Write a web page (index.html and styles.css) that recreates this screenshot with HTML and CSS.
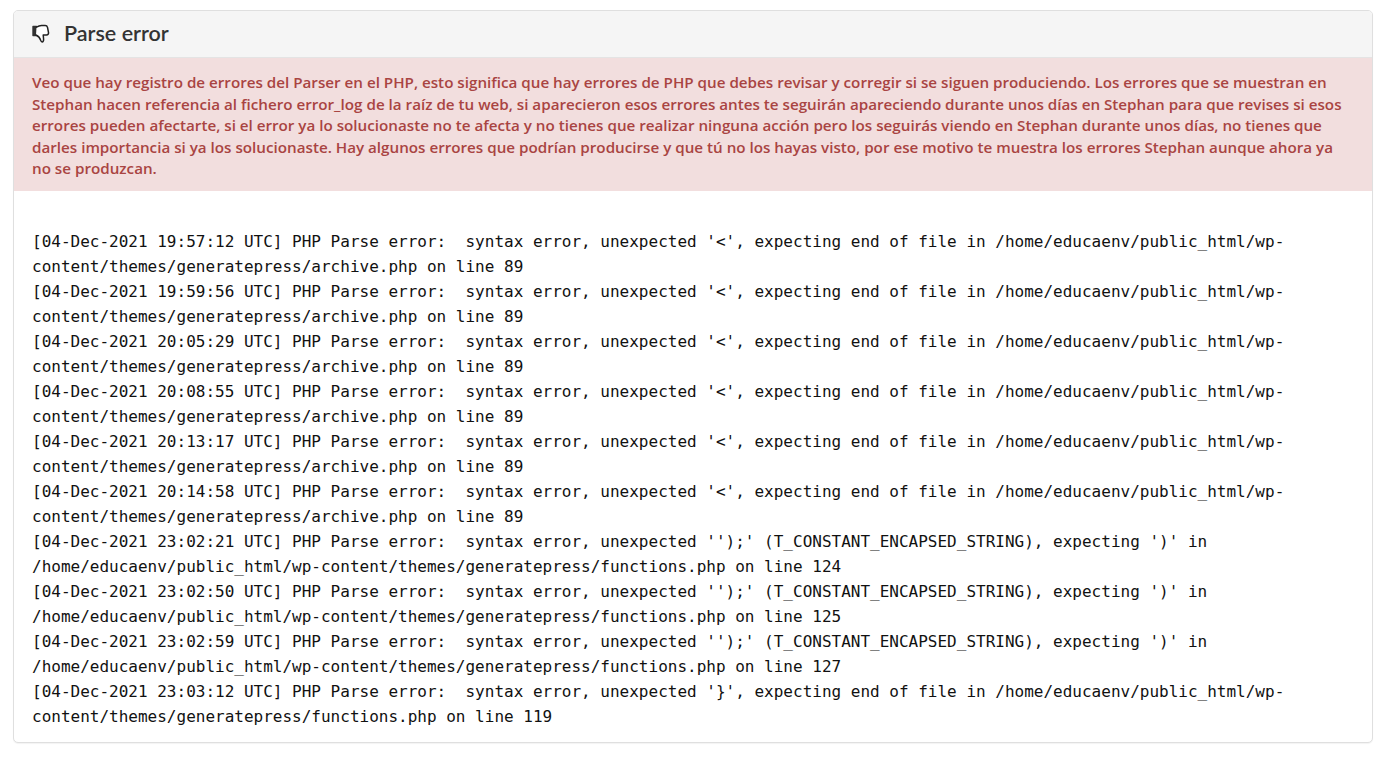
FILE: index.html
```html
<!DOCTYPE html>
<html lang="es">
<head>
<meta charset="utf-8">
<title>Parse error</title>
<link rel="stylesheet" href="styles.css">
</head>
<body>
<section class="card">
  <header class="card-head">
    <svg class="icon" viewBox="0 0 18 20" width="18" height="20" aria-hidden="true">
      <path d="M1 2.500h3.500v9H1z" fill="#333" stroke="#333" stroke-width="1.400" stroke-linejoin="round"/>
      <path d="M4.500 3.200C6 2.200 7.500 1.500 9.500 1.500h3.600c1.300 0 2.100.7 2.400 1.900l1 5.100c.2 1.400-.6 2.500-2 2.500h-3.300l.4 4.300c.1 1.400-.5 2.700-1.500 2.700-.8 0-1.100-.6-1.400-1.600-.6-2-2-4.200-4.700-5.400" fill="#fff" stroke="#222" stroke-width="1.500" stroke-linejoin="round" stroke-linecap="round"/>
    </svg>
    <h1 class="card-title">Parse error</h1>
  </header>
  <p class="alert">Veo que hay registro de errores del Parser en el PHP, esto significa que hay errores de PHP que debes revisar y corregir si se siguen produciendo. Los errores que se muestran en Stephan hacen referencia al fichero error_log de la raíz de tu web, si aparecieron esos errores antes te seguirán apareciendo durante unos días en Stephan para que revises si esos errores pueden afectarte, si el error ya lo solucionaste no te afecta y no tienes que realizar ninguna acción pero los seguirás viendo en Stephan durante unos días, no tienes que darles importancia si ya los solucionaste. Hay algunos errores que podrían producirse y que tú no los hayas visto, por ese motivo te muestra los errores Stephan aunque ahora ya no se produzcan.</p>
  <div class="log">
    <div class="log-line">[04-Dec-2021 19:57:12 UTC] PHP Parse error:  syntax error, unexpected '&lt;', expecting end of file in /home/educaenv/public_html/wp-content/themes/generatepress/archive.php on line 89</div>
    <div class="log-line">[04-Dec-2021 19:59:56 UTC] PHP Parse error:  syntax error, unexpected '&lt;', expecting end of file in /home/educaenv/public_html/wp-content/themes/generatepress/archive.php on line 89</div>
    <div class="log-line">[04-Dec-2021 20:05:29 UTC] PHP Parse error:  syntax error, unexpected '&lt;', expecting end of file in /home/educaenv/public_html/wp-content/themes/generatepress/archive.php on line 89</div>
    <div class="log-line">[04-Dec-2021 20:08:55 UTC] PHP Parse error:  syntax error, unexpected '&lt;', expecting end of file in /home/educaenv/public_html/wp-content/themes/generatepress/archive.php on line 89</div>
    <div class="log-line">[04-Dec-2021 20:13:17 UTC] PHP Parse error:  syntax error, unexpected '&lt;', expecting end of file in /home/educaenv/public_html/wp-content/themes/generatepress/archive.php on line 89</div>
    <div class="log-line">[04-Dec-2021 20:14:58 UTC] PHP Parse error:  syntax error, unexpected '&lt;', expecting end of file in /home/educaenv/public_html/wp-content/themes/generatepress/archive.php on line 89</div>
    <div class="log-line">[04-Dec-2021 23:02:21 UTC] PHP Parse error:  syntax error, unexpected '');' (T_CONSTANT_ENCAPSED_STRING), expecting ')' in /home/educaenv/public_html/wp-content/themes/generatepress/functions.php on line 124</div>
    <div class="log-line">[04-Dec-2021 23:02:50 UTC] PHP Parse error:  syntax error, unexpected '');' (T_CONSTANT_ENCAPSED_STRING), expecting ')' in /home/educaenv/public_html/wp-content/themes/generatepress/functions.php on line 125</div>
    <div class="log-line">[04-Dec-2021 23:02:59 UTC] PHP Parse error:  syntax error, unexpected '');' (T_CONSTANT_ENCAPSED_STRING), expecting ')' in /home/educaenv/public_html/wp-content/themes/generatepress/functions.php on line 127</div>
    <div class="log-line">[04-Dec-2021 23:03:12 UTC] PHP Parse error:  syntax error, unexpected '}', expecting end of file in /home/educaenv/public_html/wp-content/themes/generatepress/functions.php on line 119</div>
  </div>
</section>
</body>
</html>
```
FILE: styles.css
```css
html, body { margin: 0; padding: 0; background: #fff; }
body { padding: 10px 11px 14px 13px; }
.card {
  border: 1px solid #dfdfdf;
  border-radius: 5px;
  overflow: hidden;
  background: #fff;
  box-shadow: 0 1px 1px rgba(0,0,0,.05);
}
.card-head {
  display: flex;
  align-items: center;
  gap: 14px;
  height: 46px;
  padding: 0 18px;
  background: #f5f5f5;
  border-bottom: 1px solid #e4e4e4;
}
.icon { flex: none; }
.card-title {
  margin: 0;
  font: 600 21.500px/1 Lato, sans-serif;
  color: #333;
}
.alert {
  margin: 0;
  padding: 14px 18px 11px;
  background: #f2dede;
  color: #a94442;
  font: 600 15.200px/21.600px "Open Sans", sans-serif;
}
.log {
  padding: 38px 18px 13px;
  font: 16px/25px "DejaVu Sans Mono", monospace;
  color: #111;
}
.log-line { white-space: pre-wrap; }
```
